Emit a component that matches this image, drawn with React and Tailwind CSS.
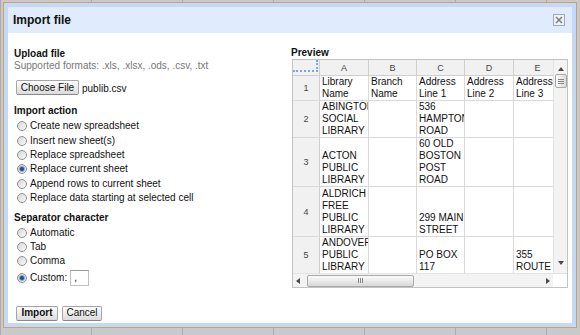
import React from 'react';

const cols = ['A', 'B', 'C', 'D', 'E'];
const colW = ['w-[49px]', 'w-[48px]', 'w-[48px]', 'w-[49px]', 'w-[48px]'];

const rows = [
    { n: 1, h: 'h-[25px]', cells: ['Library Name', 'Branch Name', 'Address Line 1', 'Address Line 2', 'Address Line 3'] },
    { n: 2, h: 'h-[37px]', cells: ['ABINGTON SOCIAL LIBRARY', '', '536 HAMPTON ROAD', '', ''] },
    { n: 3, h: 'h-[49px]', cells: ['ACTON PUBLIC LIBRARY', '', '60 OLD BOSTON POST ROAD', '', ''] },
    { n: 4, h: 'h-[50px]', cells: ['ALDRICH FREE PUBLIC LIBRARY', '', '299 MAIN STREET', '', ''] },
    { n: 5, h: 'h-[37px]', cells: ['ANDOVER PUBLIC LIBRARY', '', 'PO BOX 117', '', '355 ROUTE 1'] },
];

function Radio({ checked, label, children }) {
    return (
        <label className="flex items-center h-[14.4px] pl-[3px]">
            <span className="w-[10px] h-[10px] rounded-full border border-[#8f9092] bg-gradient-to-br from-[#d6d6d6] to-[#fbfbfb] flex items-center justify-center shrink-0">
                {checked && <span className="w-[4px] h-[4px] rounded-full bg-[#1f4f8c] shadow-[0_0_1px_1px_rgba(60,110,180,0.6)]" />}
            </span>
            <span className="ml-[3px]">{label}</span>
            {children}
        </label>
    );
}

function Btn({ children, className = '' }) {
    return (
        <button className={`h-[15px] rounded-[2px] border border-[#a6a6a6] border-b-[#8a8a8a] bg-gradient-to-b from-[#fdfdfd] to-[#dcdcdc] text-[10px] leading-none text-[#111] flex items-center justify-center ${className}`}>
            {children}
        </button>
    );
}

function Tri({ dir }) {
    const pts = { up: '0,4 3,0 6,4', down: '0,0 6,0 3,4', left: '4,0 4,6 0,3', right: '0,0 0,6 4,3' }[dir];
    const vert = dir === 'up' || dir === 'down';
    return (
        <svg width={vert ? 6 : 4} height={vert ? 4 : 6} viewBox={vert ? '0 0 6 4' : '0 0 4 6'}>
            <polygon points={pts} fill="#4a4a4a" />
        </svg>
    );
}

export default function App() {
    return (
        <div className="relative w-[580px] h-[335px] overflow-hidden bg-[#c9c9c9] font-['Liberation_Sans',Arial,sans-serif]">
            {/* spreadsheet behind the dialog */}
            <div className="flex h-full">
                <div className="w-[13px] h-full border-r border-[#ababab]" />
                {[0, 1, 2, 3, 4, 5, 6].map((i) => (
                    <div key={i} className="w-[91px] h-full shrink-0 border-r border-[#ababab]" />
                ))}
            </div>

            {/* dialog */}
            <div className="absolute left-[3px] top-[2px] w-[574px] h-[326px] border border-[#c9a56e] bg-[#c4d9f7] p-[4px] flex flex-col">
                <div className="h-[26px] bg-[#e0ecfd] flex items-center justify-between pl-[5px] pr-[7px]">
                    <span className="text-[12px] font-bold text-[#111]">Import file</span>
                    <span className="w-[12px] h-[12px] border border-[#a3a8b0] bg-[#eef3fb] flex items-center justify-center">
                        <svg width="8" height="8" viewBox="0 0 8 8">
                            <path d="M1 1 L7 7 M7 1 L1 7" stroke="#7d7d7d" strokeWidth="1.5" />
                        </svg>
                    </span>
                </div>

                <div className="flex-1 bg-white flex text-[10px] leading-[12px] text-[#111]">
                    {/* left column */}
                    <div className="w-[283px] shrink-0 pl-[6px] pt-[15px]">
                        <div className="font-bold">Upload file</div>
                        <div className="text-[#777]">Supported formats: .xls, .xlsx, .ods, .csv, .txt</div>
                        <div className="flex items-center mt-[8px] pl-[2px]">
                            <Btn className="w-[63px]">Choose File</Btn>
                            <span className="ml-[3px] mt-[3px]">publib.csv</span>
                        </div>

                        <div className="font-bold mt-[10px]">Import action</div>
                        <div className="mt-[2px]">
                            <Radio label="Create new spreadsheet" />
                            <Radio label="Insert new sheet(s)" />
                            <Radio label="Replace spreadsheet" />
                            <Radio checked label="Replace current sheet" />
                            <Radio label="Append rows to current sheet" />
                            <Radio label="Replace data starting at selected cell" />
                        </div>

                        <div className="font-bold mt-[7px]">Separator character</div>
                        <div className="mt-[1px]">
                            <Radio label="Automatic" />
                            <Radio label="Tab" />
                            <Radio label="Comma" />
                            <div className="h-[2px]" />
                            <Radio checked label="Custom:">
                                <span className="ml-[3px] w-[19px] h-[16px] border border-[#c2c2c2] border-t-[#9c9c9c] bg-white pl-[3px] leading-[14px]">,</span>
                            </Radio>
                        </div>

                        <div className="flex gap-[4px] mt-[21px] pl-[2px]">
                            <Btn className="w-[42px] font-bold">Import</Btn>
                            <Btn className="w-[40px]">Cancel</Btn>
                        </div>
                    </div>

                    {/* preview */}
                    <div className="flex-1 pt-[14px]">
                        <div className="font-bold">Preview</div>
                        <div className="w-[276px] h-[229px] ml-px border border-[#c3c3c3] flex flex-col">
                            <div className="flex flex-1 min-h-0">
                                <div className="flex-1 overflow-hidden">
                                    <div className="flex h-[16px] bg-[#f1f1f1] border-b border-[#cfcfcf] text-[9px] text-[#444]">
                                        <div className="relative w-[27px] shrink-0 border-r border-[#cfcfcf]">
                                            <div className="absolute left-0 right-[1px] bottom-[3px] border-b-2 border-dotted border-[#7fa4d9]" />
                                            <div className="absolute top-0 bottom-[3px] right-[1px] border-r-2 border-dotted border-[#7fa4d9]" />
                                        </div>
                                        {cols.map((c, i) => (
                                            <div key={c} className={`${colW[i]} shrink-0 border-r border-[#cfcfcf] flex items-center justify-center`}>{c}</div>
                                        ))}
                                    </div>
                                    {rows.map((r) => (
                                        <div key={r.n} className={`flex ${r.h} border-b border-[#d9d9d9]`}>
                                            <div className="w-[27px] shrink-0 bg-[#f1f1f1] border-r border-[#cfcfcf] flex items-center justify-center text-[9px] text-[#444]">{r.n}</div>
                                            {r.cells.map((t, i) => (
                                                <div key={i} className={`${colW[i]} shrink-0 border-r border-[#d9d9d9] overflow-hidden flex items-end pl-[2px] text-[10px] leading-[12px] text-[#111]`}>
                                                    <span className="block w-[46px]">{t}</span>
                                                </div>
                                            ))}
                                        </div>
                                    ))}
                                </div>
                                {/* vertical scrollbar */}
                                <div className="w-[14px] bg-[#f3f3f3] border-l border-[#e3e3e3] flex flex-col items-center">
                                    <div className="h-[14px] flex items-end pb-[3px]"><Tri dir="up" /></div>
                                    <div className="w-[12px] h-[14px] rounded-[2px] border border-[#a9a9a9] bg-gradient-to-r from-[#fbfbfb] to-[#dadada] flex flex-col items-center justify-center gap-[1px]">
                                        <span className="w-[6px] h-px bg-[#888]" />
                                        <span className="w-[6px] h-px bg-[#888]" />
                                        <span className="w-[6px] h-px bg-[#888]" />
                                    </div>
                                    <div className="flex-1" />
                                    <div className="h-[12px] flex items-start"><Tri dir="down" /></div>
                                </div>
                            </div>
                            {/* horizontal scrollbar */}
                            <div className="h-[14px] flex border-t border-[#e3e3e3]">
                                <div className="flex-1 bg-[#f3f3f3] flex items-center">
                                    <div className="w-[10px] flex justify-center"><Tri dir="left" /></div>
                                    <div className="w-[107px] h-[12px] ml-[4px] rounded-[2px] border border-[#a9a9a9] bg-gradient-to-b from-[#fbfbfb] to-[#d8d8d8] flex items-center justify-center gap-[1px]">
                                        <span className="w-px h-[5px] bg-[#888]" />
                                        <span className="w-px h-[5px] bg-[#888]" />
                                        <span className="w-px h-[5px] bg-[#888]" />
                                    </div>
                                    <div className="flex-1" />
                                    <div className="w-[10px] flex justify-center"><Tri dir="right" /></div>
                                </div>
                                <div className="w-[14px] bg-white" />
                            </div>
                        </div>
                    </div>
                </div>
            </div>
        </div>
    );
}
